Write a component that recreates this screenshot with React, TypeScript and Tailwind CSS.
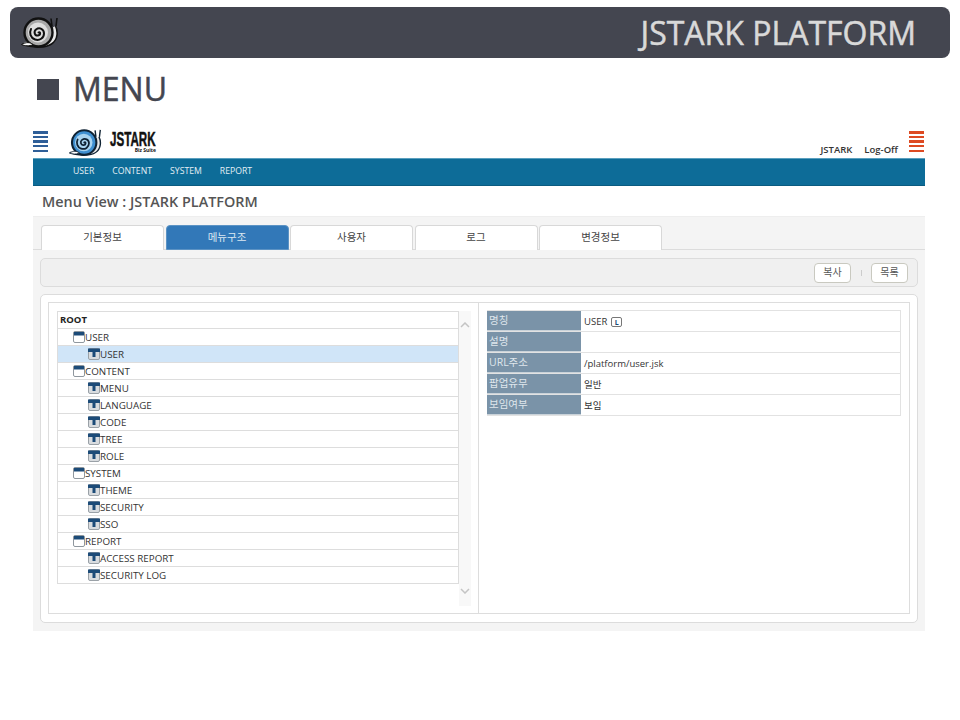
const FONT = "font-['Open_Sans','Noto_Sans_CJK_KR',sans-serif]";

const Snail = ({ blue }: { blue?: boolean }) => {
  const shell = blue ? "#3f8fd0" : "#a8a8a8";
  const light = blue ? "#a9d3ef" : "#dedede";
  const ink = blue ? "#0f2233" : "#111111";
  return (
    <svg viewBox="0 0 38 31" className="w-full h-full">
      <path d="M1 27 C6 29 12 30.500 19 30 C28 30 35 26 36 18 C36.500 14 35.500 11 34.500 9" fill="#e8e8e8" stroke={ink} strokeWidth="1.600" />
      <path d="M31 9 L30 1.500 M35 9 L36 1" stroke={ink} strokeWidth="1.600" fill="none" />
      <circle cx="17.500" cy="15.500" r="14" fill={shell} stroke={ink} strokeWidth="2.400" />
      <circle cx="17" cy="15.500" r="10" fill={light} />
      <path d="M17.500 15.500 C19.500 14 20 18 17 18.500 C13.500 19 12.500 14.500 15 12.500 C18.500 10 23 12 23 16.500 C23 21 18.500 24 14 22.500 C9.500 21 8 16 10 12" fill="none" stroke={ink} strokeWidth="2" strokeLinecap="round" />
      <path d="M0.500 27.500 C5 25 9 25 12 27.500 C8 29.500 4 29 0.500 27.500Z" fill="#ffffff" stroke={ink} strokeWidth="1" />
    </svg>
  );
};

const Stripes = ({ color }: { color: string }) => (
  <div className="w-[15px] h-[21px] flex flex-col justify-between">
    {[0, 1, 2, 3, 4].map((i) => (
      <div key={i} className={`h-[2.500px] ${color}`} />
    ))}
  </div>
);

const FolderIcon = () => (
  <svg viewBox="0 0 12 12" className="w-[12px] h-[12px] shrink-0">
    <rect x="0.500" y="0.500" width="11" height="11" rx="1.500" fill="#ffffff" stroke="#8f979e" />
    <rect x="1" y="1" width="10" height="3.500" fill="#1c4b78" />
  </svg>
);

const PageIcon = () => (
  <svg viewBox="0 0 12 12" className="w-[12px] h-[12px] shrink-0">
    <rect x="0.500" y="0.500" width="11" height="11" rx="1.500" fill="#d9dcdf" stroke="#9aa1a7" />
    <rect x="0" y="0.500" width="12" height="3.500" fill="#1c4b78" />
    <rect x="4.500" y="3" width="3" height="6" fill="#1c4b78" />
  </svg>
);

const tabs = ["기본정보", "메뉴구조", "사용자", "로그", "변경정보"];
const nav = ["USER", "CONTENT", "SYSTEM", "REPORT"];

const tree: [string, number][] = [
  ["USER", 1],
  ["USER", 2],
  ["CONTENT", 1],
  ["MENU", 2],
  ["LANGUAGE", 2],
  ["CODE", 2],
  ["TREE", 2],
  ["ROLE", 2],
  ["SYSTEM", 1],
  ["THEME", 2],
  ["SECURITY", 2],
  ["SSO", 2],
  ["REPORT", 1],
  ["ACCESS REPORT", 2],
  ["SECURITY LOG", 2],
];

const TreeRow = ({ label, level, selected }: { label: string; level: number; selected: boolean }) => (
  <div
    className={`h-[17px] flex items-center border-b border-[#dddddd] text-[9.800px] text-[#333333] ${
      level === 1 ? "pl-[15px]" : "pl-[30px]"
    } ${selected ? "bg-[#d0e5f8]" : "bg-white"}`}
  >
    {level === 1 ? <FolderIcon /> : <PageIcon />}
    <span className="pt-[2px]">{label}</span>
  </div>
);

const InfoRow = ({ label, children }: { label: string; children?: React.ReactNode }) => (
  <div className="h-[21px] flex border-b border-[#e2e2e2]">
    <div className="w-[94px] shrink-0 bg-[#7a93a8] text-[#dfe6ec] text-[10.500px] pl-[2px] flex items-center border-b border-[#c9d2d9]">
      {label}
    </div>
    <div className="flex-1 flex items-center pl-[3px] pt-[2px] gap-[4px] text-[9.500px] text-[#333333] border-r border-[#e2e2e2]">
      {children}
    </div>
  </div>
);

export default function App() {
  return (
    <div className={`w-[960px] h-[720px] bg-white overflow-hidden ${FONT}`}>
      <div className="pt-[7px] px-[10px]">
        <div className="h-[51px] bg-[#444650] rounded-lg flex items-center justify-between pl-[11px] pr-[34px]">
          <div className="w-[38px] h-[31px]">
            <Snail />
          </div>
          <span className="text-[32px] leading-none text-[#d9d9d9] [-webkit-text-stroke:0.5px_#d9d9d9]">JSTARK PLATFORM</span>
        </div>
      </div>

      <div className="h-[62px] pl-[37px] flex items-center gap-[14px]">
        <div className="w-[22px] h-[21px] bg-[#444650]" />
        <span className="text-[32px] leading-none text-[#444650] [-webkit-text-stroke:0.5px_#444650]">MENU</span>
      </div>

      <div className="ml-[33px] mr-[35px] mt-[9px]">
        <div className="h-[29px] flex items-start justify-between">
          <div className="flex items-start">
            <div className="mt-[2px]">
              <Stripes color="bg-[#2f5f98]" />
            </div>
            <div className="w-[35px] h-[27px] ml-[20px]">
              <Snail blue />
            </div>
            <div className="ml-[7px] mt-[1px] w-[46px] flex flex-col items-end">
              <span className="text-[20px] leading-[18px] font-bold text-[#111111] font-['Liberation_Sans',sans-serif] [-webkit-text-stroke:0.5px_#111111] scale-x-[0.58] origin-left w-[46px] whitespace-nowrap">JSTARK</span>
              <span className="text-[5px] leading-[5px] font-bold text-[#111111]">Biz Suite</span>
            </div>
          </div>
          <div className="flex items-start pr-px">
            <span className="text-[9.500px] text-[#333333] mt-[14px] font-semibold">JSTARK</span>
            <span className="text-[9.500px] text-[#333333] mt-[14px] ml-[12px] font-semibold">Log-Off</span>
            <div className="mt-[2px] ml-[11px]">
              <Stripes color="bg-[#dd4a22]" />
            </div>
          </div>
        </div>

        <div className="h-[28px] bg-[#0d6c98] border-t border-[#5a9fbe] border-b-[#0a5b80] border-b flex items-center pl-[40px] gap-[18px] text-[8.700px] text-[#e4eef4]">
          {nav.map((n) => (
            <span key={n}>{n}</span>
          ))}
        </div>

        <div className="h-[30px] flex items-center pl-[9px] pt-px text-[14.400px] font-semibold text-[#555555]">
          Menu View : JSTARK PLATFORM
        </div>

        <div className="h-[415px] bg-[#f4f4f4] border-t border-[#eeeeee] flex flex-col">
          <div className="h-[33px] pt-[8px] pl-[8px] flex gap-[1.500px] border-b border-[#dcdcdc]">
            {tabs.map((t, i) => (
              <div
                key={t}
                className={`w-[123px] h-[25px] rounded-t-[4px] flex items-center justify-center text-[10.500px] border ${
                  i === 1
                    ? "bg-[#3278b8] border-[#5c93c4] text-[#dce8f2]"
                    : "bg-white border-[#d8d8d8] text-[#444444] border-b-0"
                }`}
              >
                {t}
              </div>
            ))}
          </div>

          <div className="mt-[8px] mx-[7px] h-[29px] rounded-[5px] bg-[#f0f0f0] border border-[#dcdcdc] flex items-center justify-end pr-[9px]">
            <div className="w-[37px] h-[20px] rounded-[4px] bg-white border border-[#c9c9c0] flex items-center justify-center text-[10px] text-[#555555]">
              복사
            </div>
            <div className="w-px h-[6px] bg-[#cccccc] mx-[9.500px]" />
            <div className="w-[37px] h-[20px] rounded-[4px] bg-white border border-[#c9c9c0] flex items-center justify-center text-[10px] text-[#555555]">
              목록
            </div>
          </div>

          <div className="mt-[7px] mx-[7px] h-[329px] rounded-[5px] bg-white border border-[#dcdcdc] pt-[7px] px-[7px] pb-[8px]">
            <div className="h-full border border-[#dddddd] flex">
              <div className="w-[430px] shrink-0 border-r border-[#dddddd] pt-[8px] pl-[8px] flex items-start">
                <div className="w-[402px] border border-[#dddddd] border-b-0 bg-white">
                  <div className="h-[17px] flex items-center pl-[2px] border-b border-[#dddddd] text-[9.500px] font-bold text-[#222222]">
                    ROOT
                  </div>
                  {tree.map(([label, level], i) => (
                    <TreeRow key={`${label}-${i}`} label={label} level={level} selected={i === 1} />
                  ))}
                </div>
                <div className="w-[12px] h-[295px] bg-[#f8f8f8] flex flex-col items-center justify-between pt-[11px] pb-[12px]">
                  <svg viewBox="0 0 10 6" className="w-[10px] h-[6px]">
                    <path d="M1 5 L5 1 L9 5" fill="none" stroke="#c4c4c4" strokeWidth="1.500" />
                  </svg>
                  <svg viewBox="0 0 10 6" className="w-[10px] h-[6px]">
                    <path d="M1 1 L5 5 L9 1" fill="none" stroke="#c4c4c4" strokeWidth="1.500" />
                  </svg>
                </div>
              </div>
              <div className="flex-1 pt-[7px] pl-[8px] pr-[8px]">
                <div className="border-t border-[#e2e2e2]">
                  <InfoRow label="명칭">
                    <span>USER</span>
                    <span className="w-[11px] h-[10px] border border-[#777777] rounded-[2px] flex items-center justify-center text-[7px] font-bold leading-none text-[#1c4b78]">
                      L
                    </span>
                  </InfoRow>
                  <InfoRow label="설명" />
                  <InfoRow label="URL주소">
                    <span>/platform/user.jsk</span>
                  </InfoRow>
                  <InfoRow label="팝업유무">
                    <span>일반</span>
                  </InfoRow>
                  <InfoRow label="보임여부">
                    <span>보임</span>
                  </InfoRow>
                </div>
              </div>
            </div>
          </div>
        </div>
      </div>
    </div>
  );
}
